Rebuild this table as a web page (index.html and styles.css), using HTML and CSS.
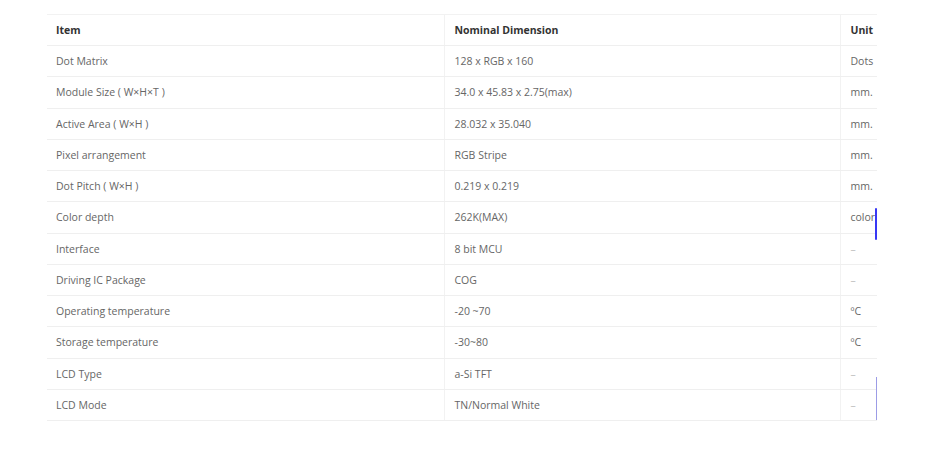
FILE: index.html
```html
<!DOCTYPE html>
<html>
<head>
<meta charset="utf-8">
<link rel="stylesheet" href="styles.css">
</head>
<body>
<div class="page">
  <div class="table-wrap">
    <table class="spec">
      <colgroup><col class="c1"><col class="c2"><col class="c3"></colgroup>
      <thead>
        <tr><th>Item</th><th>Nominal Dimension</th><th>Unit</th></tr>
      </thead>
      <tbody>
        <tr><td>Dot Matrix</td><td>128 x RGB x 160</td><td>Dots</td></tr>
        <tr><td>Module Size ( W×H×T )</td><td>34.0 x 45.83 x 2.75(max)</td><td>mm.</td></tr>
        <tr><td>Active Area ( W×H )</td><td>28.032 x 35.040</td><td>mm.</td></tr>
        <tr><td>Pixel arrangement</td><td>RGB Stripe</td><td>mm.</td></tr>
        <tr><td>Dot Pitch ( W×H )</td><td>0.219 x 0.219</td><td>mm.</td></tr>
        <tr><td>Color depth</td><td>262K(MAX)</td><td>colors</td></tr>
        <tr><td>Interface</td><td>8 bit MCU</td><td class="dash">–</td></tr>
        <tr><td>Driving IC Package</td><td>COG</td><td class="dash">–</td></tr>
        <tr><td>Operating temperature</td><td>-20 ~70</td><td>ºC</td></tr>
        <tr><td>Storage temperature</td><td>-30~80</td><td>ºC</td></tr>
        <tr><td>LCD Type</td><td>a-Si TFT</td><td class="dash">–</td></tr>
        <tr><td>LCD Mode</td><td>TN/Normal White</td><td class="dash">–</td></tr>
      </tbody>
    </table>
    <div class="bar-active"></div>
    <div class="bar-thin"></div>
  </div>
</div>
</body>
</html>
```
FILE: styles.css
```css
html, body {
  margin: 0;
  padding: 0;
  background: #ffffff;
}
body {
  font-family: "Open Sans", "Noto Sans", sans-serif;
  font-size: 10.5px;
  color: #666666;
}
.page {
  padding: 14px 0 0 47px;
}
.table-wrap {
  position: relative;
  width: 830px;
  overflow: hidden;
}
.spec {
  border-collapse: collapse;
  table-layout: fixed;
  width: 913px;
}
.c1 { width: 397px; }
.c2 { width: 396px; }
.c3 { width: 120px; }
.spec th,
.spec td {
  text-align: left;
  padding: 1px 0 0 9px;
  height: 31.25px;
  box-sizing: border-box;
  border-bottom: 1px solid #efefef;
  white-space: nowrap;
  line-height: 15px;
}
.spec th + th,
.spec td + td {
  border-left: 1px solid #f2f2f2;
  padding-left: 10px;
}
.spec thead th {
  border-top: 1px solid #f2f2f2;
  height: 31px;
  font-weight: 700;
  color: #333333;
}
.spec td.dash {
  color: #c0c0c0;
}
.bar-active {
  position: absolute;
  left: 828px;
  top: 194px;
  width: 2px;
  height: 32px;
  border-radius: 1px;
  background: #3838f5;
}
.bar-thin {
  position: absolute;
  left: 829px;
  top: 363px;
  width: 1px;
  height: 43px;
  background: #9c9ce6;
}
```
